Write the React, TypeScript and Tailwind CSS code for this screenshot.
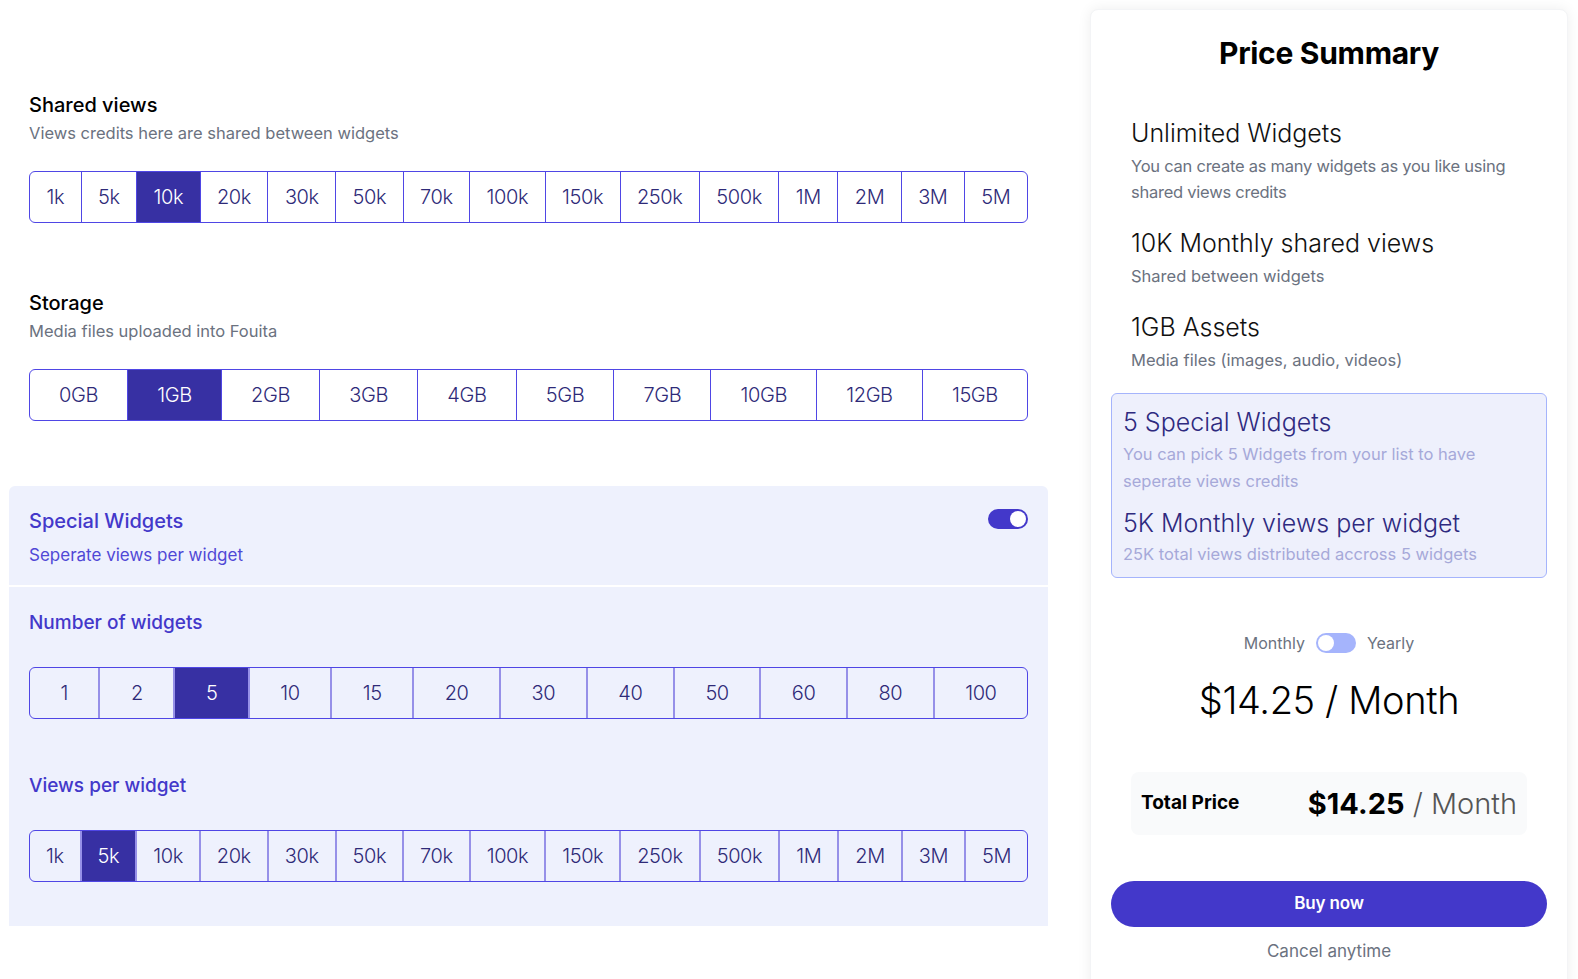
import { useState } from "react";

const sharedViews = ["1k", "5k", "10k", "20k", "30k", "50k", "70k", "100k", "150k", "250k", "500k", "1M", "2M", "3M", "5M"];
const storage = ["0GB", "1GB", "2GB", "3GB", "4GB", "5GB", "7GB", "10GB", "12GB", "15GB"];
const widgetCounts = ["1", "2", "5", "10", "15", "20", "30", "40", "50", "60", "80", "100"];

type SegmentedProps = {
    options: string[];
    value: string;
    onChange: (v: string) => void;
    tinted?: boolean;
};

function Segmented({ options, value, onChange, tinted }: SegmentedProps) {
    return (
        <div className="flex w-full h-[52px] rounded-md border border-[#4f46e5] overflow-hidden">
            {options.map((opt, i) => {
                const active = opt === value;
                return (
                    <button
                        key={opt}
                        onClick={() => onChange(opt)}
                        className={`flex-auto px-3 text-[20px] font-light tracking-[-0.02em] ${
                            i === 0 ? "" : tinted ? "border-l-2 border-[#9690e8]" : "border-l border-[#4f46e5]"
                        } ${active ? "bg-[#3730a3] text-white" : "text-[#2e2a78]"}`}
                    >
                        {opt}
                    </button>
                );
            })}
        </div>
    );
}

function Toggle({ on, onClick, light }: { on: boolean; onClick: () => void; light?: boolean }) {
    return (
        <button
            onClick={onClick}
            className={`flex items-center w-10 h-5 rounded-full px-[2px] ${
                light ? "bg-[#a5b4fc]" : "bg-[#4338ca]"
            } ${on ? "justify-end" : "justify-start"}`}
        >
            <span className="block w-4 h-4 rounded-full bg-white" />
        </button>
    );
}

export default function App() {
    const [views, setViews] = useState("10k");
    const [store, setStore] = useState("1GB");
    const [special, setSpecial] = useState(true);
    const [count, setCount] = useState("5");
    const [perWidget, setPerWidget] = useState("5k");
    const [yearly, setYearly] = useState(false);

    return (
        <div className="h-screen overflow-hidden bg-white flex items-start gap-[42px] pl-[9px] pr-[10px] pt-[9px] font-['Inter',sans-serif]">
            {/* left: options */}
            <div className="w-[1039px] shrink-0 pt-[82px] flex flex-col">
                <div className="px-5">
                    <h3 className="text-[20px] leading-7 font-medium text-black">Shared views</h3>
                    <p className="mt-0.5 text-[16.5px] leading-6 text-[#6b7280]">
                        Views credits here are shared between widgets
                    </p>
                    <div className="mt-[26px]">
                        <Segmented options={sharedViews} value={views} onChange={setViews} />
                    </div>
                </div>

                <div className="px-5 mt-[66px]">
                    <h3 className="text-[20px] leading-7 font-medium text-black">Storage</h3>
                    <p className="mt-0.5 text-[16.5px] leading-6 text-[#6b7280]">Media files uploaded into Fouita</p>
                    <div className="mt-[26px]">
                        <Segmented options={storage} value={store} onChange={setStore} />
                    </div>
                </div>

                <div className="mt-[65px] flex flex-col gap-0.5">
                    <div className="bg-[#eef1fd] rounded-t-md px-5 pt-[21px] pb-[18px] flex items-start justify-between">
                        <div>
                            <h3 className="text-[20px] leading-7 font-medium text-[#4338ca]">Special Widgets</h3>
                            <p className="mt-2 text-[17px] leading-6 text-[#5048d6]">Seperate views per widget</p>
                        </div>
                        <div className="mt-[2px]">
                            <Toggle on={special} onClick={() => setSpecial(!special)} />
                        </div>
                    </div>
                    <div className="bg-[#eef1fd] px-5 pt-[22px] pb-[44px]">
                        <h3 className="text-[19px] leading-7 font-medium text-[#4338ca]">Number of widgets</h3>
                        <div className="mt-[30px]">
                            <Segmented options={widgetCounts} value={count} onChange={setCount} tinted />
                        </div>
                        <h3 className="mt-[53px] text-[19px] leading-7 font-medium text-[#4338ca]">Views per widget</h3>
                        <div className="mt-[30px]">
                            <Segmented options={sharedViews} value={perWidget} onChange={setPerWidget} tinted />
                        </div>
                    </div>
                </div>
            </div>

            {/* right: summary card */}
            <div className="w-[478px] shrink-0 min-h-[1000px] rounded-lg border border-gray-100 bg-white shadow-[0_0_14px_rgba(0,0,0,0.07)] px-5 pt-[23px]">
                <h2 className="text-center text-[30px] leading-10 font-bold text-black tracking-[-0.01em]">Price Summary</h2>

                <div className="mt-11 px-5">
                    <div>
                        <h4 className="text-[25px] leading-8 font-light text-[#111]">Unlimited Widgets</h4>
                        <p className="mt-1 text-[16.5px] leading-[26px] tracking-[-0.015em] text-[#6b7280]">
                            You can create as many widgets as you like using shared views credits
                        </p>
                    </div>
                    <div className="mt-[22px]">
                        <h4 className="text-[25px] leading-8 font-light text-[#111]">10K Monthly shared views</h4>
                        <p className="mt-1 text-[16.5px] leading-[26px] text-[#6b7280]">Shared between widgets</p>
                    </div>
                    <div className="mt-[22px]">
                        <h4 className="text-[25px] leading-8 font-light text-[#111]">1GB Assets</h4>
                        <p className="mt-1 text-[16.5px] leading-[26px] text-[#6b7280]">Media files (images, audio, videos)</p>
                    </div>
                </div>

                <div className="mt-5 rounded-md border border-[#a5b4fc] bg-[#eef0fc] px-[11px] pt-3 pb-[9px]">
                    <h4 className="text-[25px] leading-8 font-light text-[#2e2a7f]">5 Special Widgets</h4>
                    <p className="mt-[3px] text-[16.5px] leading-[27px] text-[#a6a9d9]">
                        You can pick 5 Widgets from your list to have seperate views credits
                    </p>
                    <h4 className="mt-3 text-[25px] leading-8 font-light text-[#2e2a7f]">5K Monthly views per widget</h4>
                    <p className="mt-0.5 text-[16.5px] leading-[27px] text-[#a6a9d9]">
                        25K total views distributed accross 5 widgets
                    </p>
                </div>

                <div className="mt-[53px] flex items-center justify-center gap-[11px] text-[16px] leading-6 text-[#6b7280]">
                    <span>Monthly</span>
                    <Toggle on={yearly} onClick={() => setYearly(!yearly)} light />
                    <span>Yearly</span>
                </div>

                <div className="mt-[21px] text-center text-[38px] leading-[48px] font-light text-black tracking-[-0.01em]">
                    $14.25 / Month
                </div>

                <div className="mt-12 mx-5 h-[63px] rounded-lg bg-[#f9fafb] flex items-center justify-between px-[10px]">
                    <span className="text-[19px] font-bold text-black">Total Price</span>
                    <span className="text-[29px] leading-none">
                        <span className="font-bold text-black">$14.25</span>
                        <span className="font-light text-[#555]"> / Month</span>
                    </span>
                </div>

                <button className="mt-[46px] w-full h-[46px] rounded-full bg-[#4338ca] text-white text-[17px] font-semibold tracking-[-0.01em]">
                    Buy now
                </button>

                <p className="mt-3 text-center text-[17px] leading-6 text-[#6b7280]">Cancel anytime</p>
            </div>
        </div>
    );
}
